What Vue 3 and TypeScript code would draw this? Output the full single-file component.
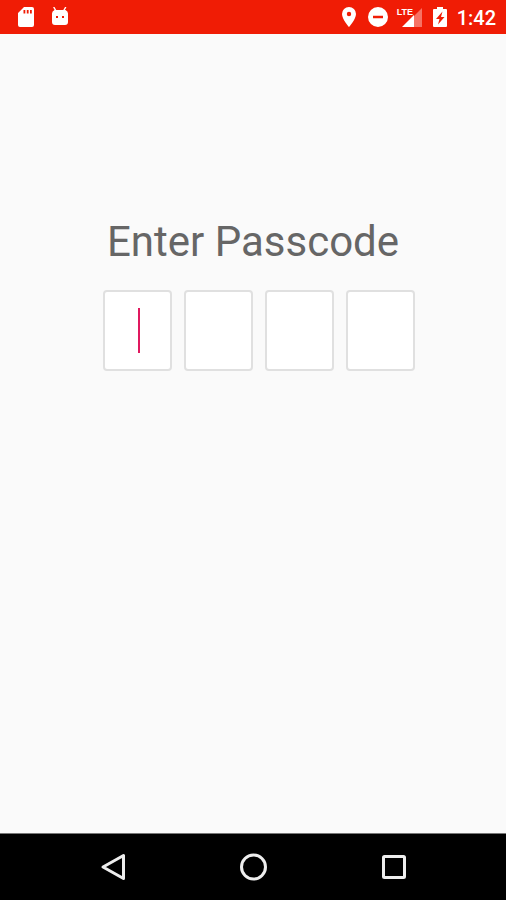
<script setup lang="ts">
import { ref } from 'vue'

const digits = ref<string[]>(['', '', '', ''])
const active = ref(0)
const boxes = ref<HTMLInputElement[]>([])

function onInput(index: number) {
  digits.value[index] = digits.value[index].replace(/\D/g, '').slice(-1)
  if (digits.value[index] && index < digits.value.length - 1) {
    boxes.value[index + 1]?.focus()
  }
}
</script>

<template>
  <div class="screen">
    <header class="status">
      <div class="group notices">
        <svg width="16" height="20" viewBox="0 0 16 20" aria-hidden="true">
          <path fill="#fff" fill-rule="evenodd" d="M6 0H14a2 2 0 0 1 2 2V18a2 2 0 0 1-2 2H2a2 2 0 0 1-2-2V6ZM5.5 3V6.5H7.3V3ZM8.8 3V6.5H10.6V3ZM12 3V6.5H13.8V3Z" />
        </svg>
        <svg width="18" height="20" viewBox="0 0 18 20" aria-hidden="true">
          <path d="M3 0.5L5 4M14.5 0.5L12.5 4" stroke="#fff" stroke-width="1.5" stroke-linecap="round" />
          <path fill="#fff" fill-rule="evenodd" d="M3.5 3H14.5Q17 4 17 6.5V15a3 3 0 0 1-3 3H4a3 3 0 0 1-3-3V6.5Q1 4 3.5 3ZM5 9V11H7V9ZM11 9V11H13V9Z" />
        </svg>
      </div>
      <div class="group system">
        <svg class="pin" width="14" height="20" viewBox="0 0 14 20" aria-hidden="true">
          <path fill="#fff" fill-rule="evenodd" d="M7 0a7 7 0 0 1 7 7c0 5.2-7 13-7 13S0 12.2 0 7a7 7 0 0 1 7-7Zm0 4.8a2.2 2.2 0 1 0 0 4.400a2.2 2.2 0 0 0 0-4.400Z" />
        </svg>
        <svg width="20" height="20" viewBox="0 0 20 20" aria-hidden="true">
          <path fill="#fff" fill-rule="evenodd" d="M10 0a10 10 0 1 1 0 20a10 10 0 0 1 0-20ZM5 8.8V11.2H15V8.8Z" />
        </svg>
        <div class="signal">
          <svg width="25" height="20" viewBox="0 0 25 20" aria-hidden="true">
            <path fill="#fff" fill-opacity=".38" d="M24 1V20H16V9Z" />
            <path fill="#fff" d="M4 20L16 8V20Z" />
          </svg>
          <span class="lte">LTE</span>
        </div>
        <svg width="14" height="20" viewBox="0 0 14 20" aria-hidden="true">
          <path fill="#fff" fill-rule="evenodd" d="M4 0H10V2H13a1 1 0 0 1 1 1V19a1 1 0 0 1-1 1H1a1 1 0 0 1-1-1V3a1 1 0 0 1 1-1H4ZM9.5 4.5L3 12H6.5L5 17.5L11.5 10H8Z" />
        </svg>
        <time class="clock">1:42</time>
      </div>
    </header>

    <main class="content">
      <h1 id="passcode-title" class="title">Enter Passcode</h1>
      <div class="boxes" role="group" aria-labelledby="passcode-title">
        <label v-for="(_, i) in digits" :key="i" class="box">
          <input
            ref="boxes"
            v-model="digits[i]"
            class="digit"
            type="password"
            inputmode="numeric"
            maxlength="1"
            :aria-label="`Digit ${i + 1}`"
            @focus="active = i"
            @input="onInput(i)"
          />
          <span v-if="active === i && !digits[i]" class="caret"></span>
        </label>
      </div>
    </main>

    <nav class="navbar" aria-label="System">
      <button class="key" type="button" aria-label="Back">
        <svg width="28" height="28" viewBox="0 0 28 28" aria-hidden="true">
          <path d="M25.5 2.500V25.500L5 14Z" />
        </svg>
      </button>
      <button class="key" type="button" aria-label="Home">
        <svg width="28" height="28" viewBox="0 0 28 28" aria-hidden="true">
          <circle cx="14.5" cy="14" r="12" />
        </svg>
      </button>
      <button class="key" type="button" aria-label="Overview">
        <svg width="28" height="28" viewBox="0 0 28 28" aria-hidden="true">
          <rect x="3.5" y="3.5" width="21" height="21" rx="1" />
        </svg>
      </button>
    </nav>
  </div>
</template>

<style>
body {
  margin: 0;
}
</style>

<style scoped>
.screen {
  display: flex;
  flex-direction: column;
  min-height: 100vh;
  background: #fafafa;
  font-family: Roboto, "Liberation Sans", sans-serif;
}

.status {
  display: flex;
  align-items: center;
  justify-content: space-between;
  height: 34px;
  padding: 0 10px 0 18px;
  background: #f01c05;
  color: #fff;
}

.group {
  display: flex;
  align-items: center;
}

.notices {
  gap: 17px;
}

.system {
  gap: 10px;
}

.pin {
  margin-right: 2px;
}

.signal {
  position: relative;
  display: flex;
}

.lte {
  position: absolute;
  top: 0;
  left: -1px;
  font-family: "Liberation Sans Narrow", "Liberation Sans", sans-serif;
  font-size: 9px;
  font-weight: 700;
  line-height: 10px;
}

.clock {
  padding-top: 2px;
  font-size: 20px;
  font-weight: 500;
  line-height: 32px;
}

.content {
  flex: 1;
  display: flex;
  flex-direction: column;
  align-items: center;
  padding-top: 182px;
}

.title {
  margin: 0;
  color: #666;
  font-size: 42px;
  font-weight: 400;
  line-height: 52px;
}

.boxes {
  display: flex;
  gap: 12px;
  margin-top: 22px;
  padding-left: 12px;
}

.box {
  position: relative;
  display: flex;
}

.digit {
  box-sizing: border-box;
  width: 69px;
  height: 81px;
  padding: 0;
  border: 2px solid #e0e0e0;
  border-radius: 4px;
  outline: none;
  background: #fff;
  color: #444;
  font: inherit;
  font-size: 40px;
  text-align: center;
  caret-color: transparent;
}

.caret {
  position: absolute;
  top: 18px;
  left: 50%;
  width: 2px;
  height: 45px;
  background: #e0195f;
  pointer-events: none;
}

.navbar {
  display: flex;
  justify-content: center;
  gap: 113px;
  padding: 19px 0;
  border-top: 1px solid #777;
  background: #000;
}

.key {
  display: flex;
  padding: 0;
  border: 0;
  background: none;
  cursor: pointer;
}

.key svg {
  fill: none;
  stroke: #eee;
  stroke-width: 3;
  stroke-linejoin: round;
}
</style>
